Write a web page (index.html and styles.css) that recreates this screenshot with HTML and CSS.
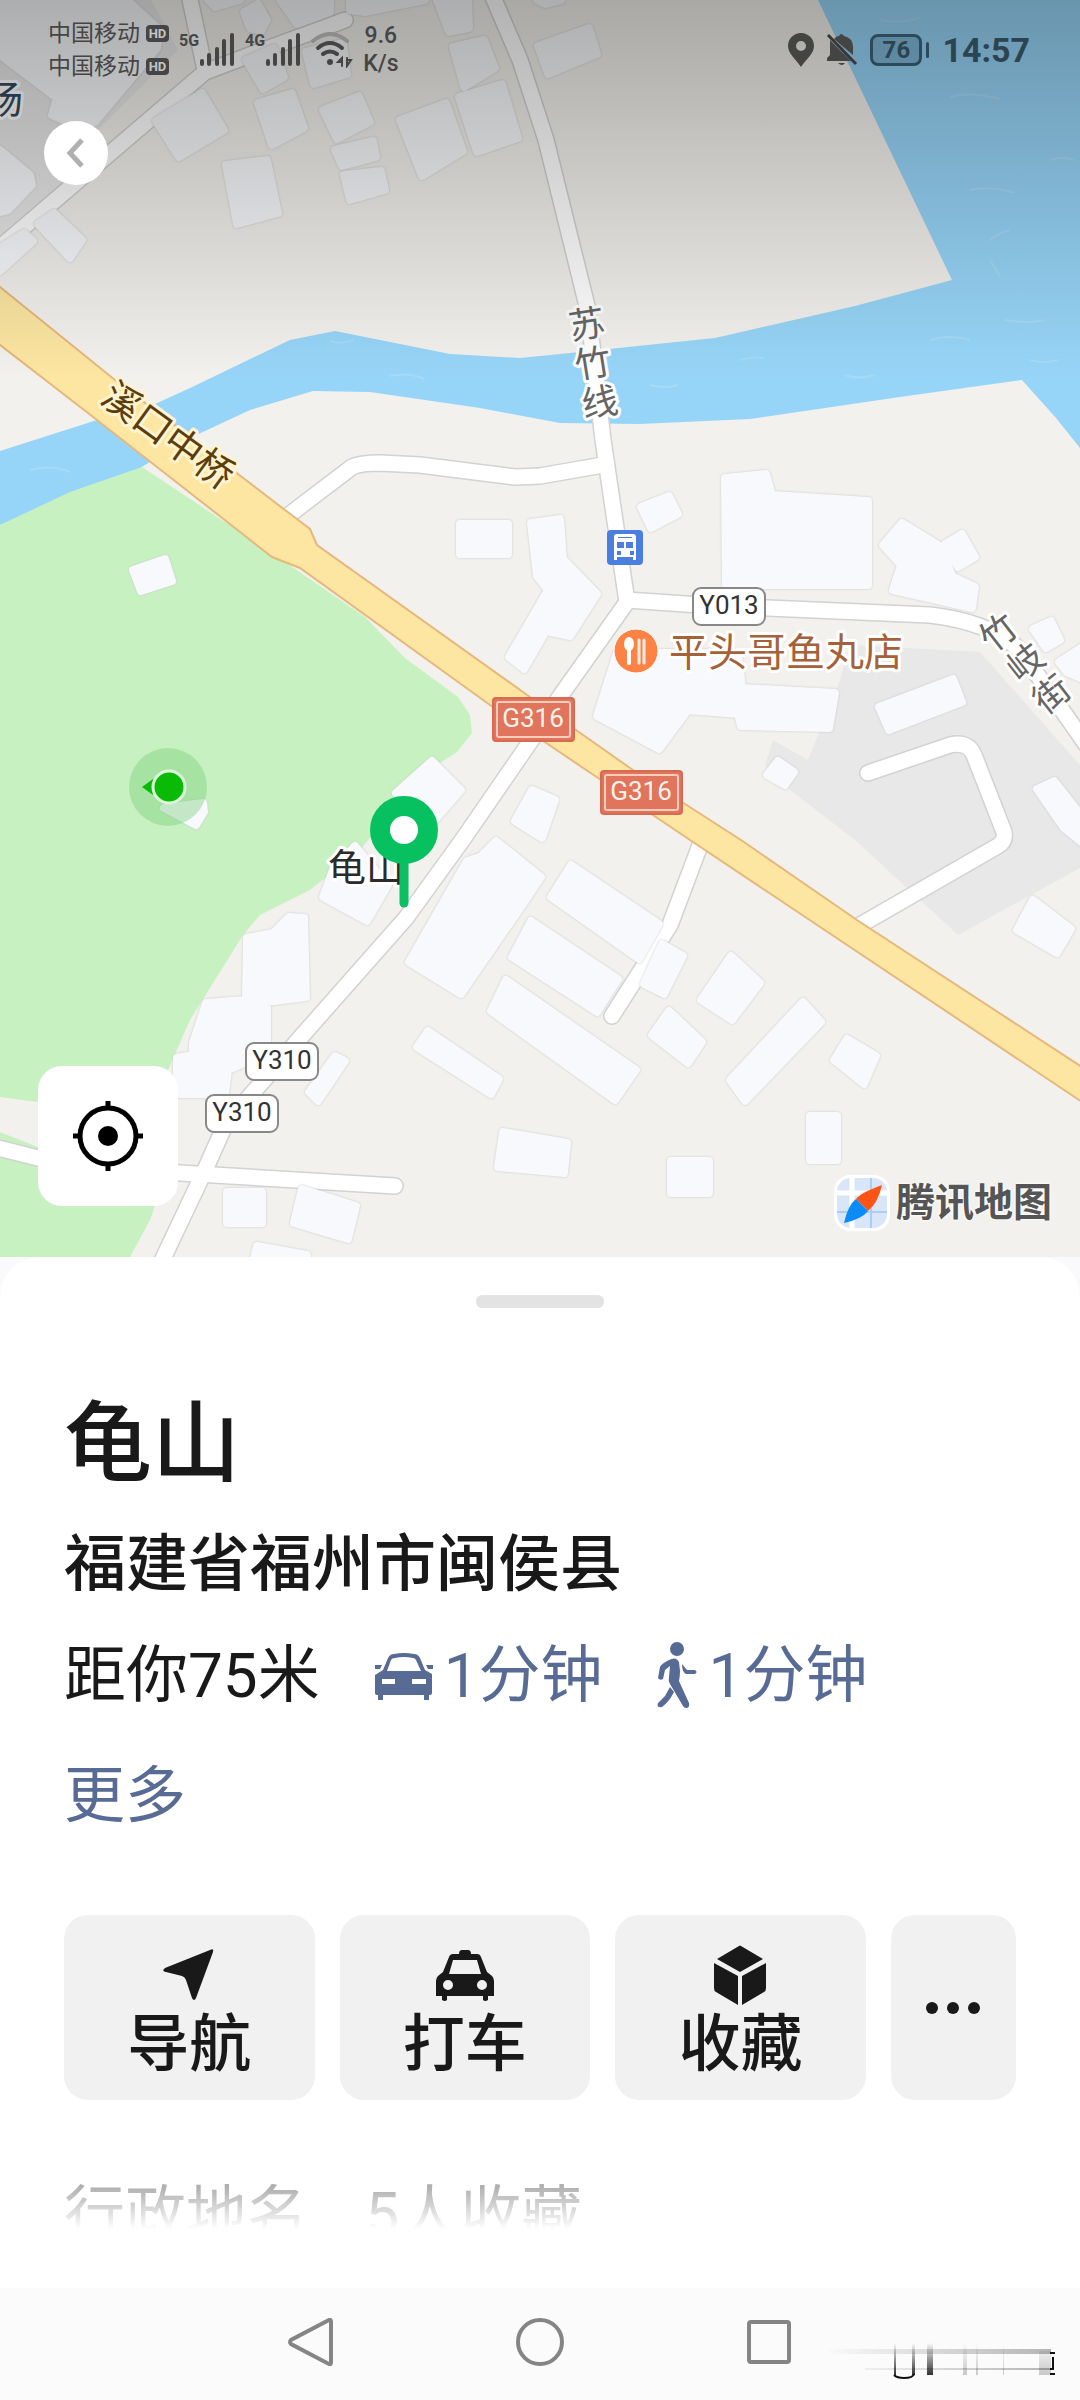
FILE: index.html
```html
<!DOCTYPE html>
<html lang="zh-CN">
<head>
    <meta charset="UTF-8">
    <meta name="viewport" content="width=device-width, initial-scale=1.0">
    <title>龟山</title>
    <link rel="stylesheet" href="styles.css">
</head>
<body>
    <div class="map">
        <svg class="map-canvas" viewBox="0 0 1080 1257">
            <!-- river -->
            <path class="water" d="M0 451 97 420 155 404 190 388 290 340 335 331 450 354 520 358 580 352 715 338 855 306 952 280 818 0H1080V448L1056 418 1022 380 900 397 750 419 640 424 560 423 480 408 370 392 313 391 250 410 190 438 140 468 105 487 0 525Z"/>
            <path class="ripple" d="M330 341q12 4 24 -1M390 376q20 -4 34 3M650 385q16 4 28 0M740 360q14 -4 24 -2M845 375q12 5 30 0M930 340q20 -6 40 0M970 190q20 -4 45 3M950 97q20 -6 50 2M990 240q10 -8 20 -10M1005 320q20 4 40 0M30 470q20 -6 40 2M1050 160q12 -4 24 0M880 20q20 4 40 -2M1030 360q14 4 28 0M990 260l10 16"/>

            <!-- green land -->
            <path class="green" d="M0 525 70 492 142 467 285 562 365 617 405 658 458 697 470 715 472 733 457 752 420 776 360 850 310 890 260 915 243 935 190 1020 155 1100 100 1110 38 1102 0 1097Z"/>
            <path class="green" d="M0 1132 38 1147 80 1160 155 1180V1206L150 1220 130 1257H0Z"/>

            <!-- grey sites -->
            <path class="site" d="M0 0H151L178 50 100 128 62 183 0 235Z"/>
            <path class="site" d="M850 645 980 652 1080 765V868L958 935 855 840 790 790 765 765 773 740 808 760 840 680Z"/>

            <!-- small roads: casing first, then fill -->
            <g class="road-case">
                <path id="r1" d="M-10 256 205 72 250 55 345 20M188 -10 205 70"/>
                <path id="r2" d="M490 -10 520 60 546 140 588 310 603 440 627 602"/>
                <path id="r3" d="M285 518 352 467Q360 463 380 463L420 465 515 477 540 476 603 465"/>
                <path id="r4" d="M627 600 700 605 930 615Q990 622 1020 650L1090 750"/>
                <path id="r5" d="M868 773 950 745Q968 741 974 755L1004 832Q1006 842 996 847L855 928"/>
                <path id="r6" d="M702 840 670 925 612 1016"/>
                <path id="r7" d="M160 1265 205 1170 225 1125 300 1038 406 918 461 842 528 745 561 695 627 602"/>
                <path id="r8" d="M-10 1146 38 1158 180 1173 395 1186"/>
            </g>
            <g class="road-fill">
                <use href="#r1"/><use href="#r2"/><use href="#r3"/><use href="#r4"/>
                <use href="#r5"/><use href="#r6"/><use href="#r7"/><use href="#r8"/>
            </g>

            <g class="buildings">
                <path d="M0 3H130L160 30 157 48 95 122 75 125 52 115 57 98 0 55ZM0 150 30 175 32 185 8 210 0 212Z"/>
                <path d="M208 0H240L215 7ZM244 12 258 4 267 20 261 31 250 28ZM280 0H330V12L297 24ZM350 0H425L365 12 350 10ZM437 0H468L469 28 449 32Z"/>
                <path d="M453 47 484 40 495 68 464 87ZM459 97 502 84 518 138 477 152ZM400 120 446 103 463 151 422 176ZM156 121 202 93 224 130 179 157ZM258 103 292 93 304 128 272 145ZM323 110 359 96 370 122 337 139Z"/>
                <path d="M335 150 373 141 376 157 342 166ZM344 175 381 171 385 190 350 200ZM226 165 267 160 278 213 237 224ZM246 60 274 48 284 77 263 89ZM306 52 343 43 347 74 314 84ZM38 224 54 213 82 240 70 258ZM0 248 24 233 33 241 0 271ZM538 46 589 28 597 54 548 74ZM537 0H561L545 4Z"/>
                <path d="M460 524H508V554H460ZM133 570 165 559 172 581 141 591ZM164 808 203 803 204 812 196 825ZM396 793 432 761 461 790 430 826ZM333 870 355 846 388 885 367 921 323 897Z"/>
                <path d="M531 523 560 519 563 559 597 594 570 636 546 631 524 669 509 657 548 590 537 576ZM641 507 669 496 678 514 651 528ZM725 478 766 474 772 495 868 501V585H726Z"/>
                <path d="M883 545 902 523 938 545 953 577 975 587 972 608 893 590 901 565ZM944 545 962 534 975 557 958 567ZM617 653 738 653 742 688 835 693 829 728 741 726 738 714 688 710 659 749 597 716ZM879 707 953 679 962 702 889 730ZM767 775 778 761 794 772 785 785Z"/>
                <path d="M1033 629 1051 621 1060 640 1046 648ZM1059 662 1085 645V680L1067 672ZM1037 789 1054 781 1085 820V845L1064 828ZM515 821 532 790 555 800 542 838ZM409 962 467 861 480 857 496 841 541 877 523 904 461 994Z"/>
                <path d="M551 897 571 865 659 924 639 959ZM512 957 531 921 618 979 597 1012ZM491 1011 506 980 636 1070 615 1100ZM417 1047 428 1031 499 1079 491 1094ZM662 944 683 956 664 994 644 984ZM731 956 760 983 732 1020 701 1000ZM652 1035 669 1011 702 1042 688 1063ZM803 1002 821 1022 745 1101 730 1080ZM834 1060 847 1039 876 1056 864 1084Z"/>
                <path d="M810 1116H837V1160H810ZM671 1161H709V1193H671ZM498 1167 503 1132 567 1143 564 1173ZM1017 930 1033 900 1071 929 1057 953ZM247 938 273 933 289 917 304 918 306 997 267 1002V1053L228 1070 225 1094H177V1058L193 1055V1043L206 1003 246 1000ZM309 1092 335 1056 345 1061 318 1101ZM227 1192H262V1223H227ZM294 1223 302 1189 356 1206 348 1239ZM253 1262 257 1246 307 1255V1262Z"/>
            </g>

            <!-- national road G316 -->
            <path class="highway" d="M-5 283 115 380 285 510 310 529 317 545 530 697 576 730 640 775 741 840 857 920 1085 1069V1104L690 840 601 780 490 705 300 568 272 557 97 420 -5 341Z"/>

            <!-- road and place names -->
            <text class="label bridge" transform="rotate(36 170 436)" x="168" y="450">溪口中桥</text>
            <g class="label street">
                <text transform="rotate(-9 587 325)" x="587" y="337">苏</text>
                <text transform="rotate(-9 593 364)" x="593" y="376">竹</text>
                <text transform="rotate(-9 600 403)" x="600" y="415">线</text>
                <text transform="rotate(-38 999 633)" x="999" y="645">竹</text>
                <text transform="rotate(-38 1026 663)" x="1026" y="675">岐</text>
                <text transform="rotate(-38 1052 695)" x="1052" y="707">街</text>
            </g>
            <text class="label yard" x="4" y="113">场</text>
            <text class="label shop" x="669" y="666">平头哥鱼丸店</text>
            <text class="label place" x="328" y="881">龟山</text>

            <g class="shield">
                <rect x="693" y="588" width="72" height="37" rx="8"/>
                <text x="729" y="614">Y013</text>
                <rect x="246" y="1043" width="72" height="37" rx="8"/>
                <text x="282" y="1069">Y310</text>
                <rect x="206" y="1095" width="72" height="37" rx="8"/>
                <text x="242" y="1121">Y310</text>
            </g>
            <g class="shield shield-red">
                <rect x="493" y="698" width="81" height="43" rx="3"/>
                <rect class="inner" x="497" y="702" width="73" height="35" rx="2"/>
                <text x="533" y="727">G316</text>
                <rect x="601" y="771" width="81" height="43" rx="3"/>
                <rect class="inner" x="605" y="775" width="73" height="35" rx="2"/>
                <text x="641" y="800">G316</text>
            </g>

            <!-- bus stop -->
            <g>
                <rect x="607" y="530" width="36" height="35" rx="4" fill="#4a7fe0"/>
                <path fill="#fff" d="M614 537q0 -3 3 -3h16q3 0 3 3v23h-3v-3h-16v3h-3Z"/>
                <path fill="#4a7fe0" d="M618 537h14v1h-14ZM617 542h7v6h-7ZM626 542h7v6h-7ZM617 551h4v4h-4ZM630 551h4v4h-4Z"/>
            </g>

            <!-- restaurant -->
            <g>
                <circle cx="636" cy="651" r="22" fill="#fd8344" stroke="#fff" stroke-width="1"/>
                <ellipse cx="629" cy="644" rx="5" ry="7" fill="#fff"/>
                <path stroke="#fff" stroke-width="4" stroke-linecap="round" d="M629 648V663"/>
                <path stroke="#fff" stroke-width="3" stroke-linecap="round" d="M639 640V663M644 640V663" opacity=".85"/>
            </g>

            <!-- current position -->
            <g>
                <circle cx="168" cy="787" r="39" fill="#6fce72" opacity=".38"/>
                <path fill="#09bb07" d="M142 787 153 779V795Z"/>
                <circle cx="169" cy="787" r="16" fill="#09bb07" stroke="#dff7dc" stroke-width="3"/>
            </g>

            <!-- selected place -->
            <g>
                <path stroke="#0cbf62" stroke-width="9" stroke-linecap="round" d="M404 855V903"/>
                <circle cx="404" cy="830" r="24" fill="#fff" stroke="#07c160" stroke-width="20"/>
            </g>
        </svg>

        <div class="map-shade"></div>

        <header class="status">
            <div class="carriers">
                <span>中国移动<b class="hd">HD</b></span>
                <span>中国移动<b class="hd">HD</b></span>
            </div>
            <div class="signal">
                <b>5G</b>
                <svg width="36" height="36" viewBox="0 0 36 36"><path d="M3 29V32M10 23V32M18 17V32M25 9V32M33 3V32"/></svg>
            </div>
            <div class="signal">
                <b>4G</b>
                <svg width="36" height="36" viewBox="0 0 36 36"><path d="M3 29V32M10 23V32M18 17V32M25 9V32M33 3V32"/></svg>
            </div>
            <svg class="wifi" width="42" height="36" viewBox="0 0 42 36">
                <path class="dim" d="M2 9Q19 -5 36 9"/>
                <path d="M7 16Q19 6 31 16M12 22Q19 17 26 22"/>
                <circle cx="19" cy="30" r="3"/>
                <path class="arrows" d="M31 34V26L27 30H31M36 26V34L40 28H36"/>
            </svg>
            <div class="speed"><span>9.6</span><span>K/s</span></div>
            <div class="status-right">
                <svg width="26" height="34" viewBox="0 0 26 34"><path fill-rule="evenodd" d="M13 0A13 13 0 0 0 0 13C0 21 8 26 13 34 18 26 26 21 26 13A13 13 0 0 0 13 0ZM13 8a5 5 0 1 1 0 10a5 5 0 1 1 0 -10Z"/></svg>
                <svg width="32" height="34" viewBox="0 0 32 34">
                    <path d="M4 7 25 28H1V25L4 22ZM8 6Q10 3 13 3Q15 -1 18 3Q27 5 27 14V22ZM12 30H19Q16 34 12 30Z"/>
                    <path stroke="#33383a" stroke-width="3" d="M2 2 30 31"/>
                </svg>
                <div class="battery">76</div>
                <time>14:57</time>
            </div>
        </header>

        <button class="back" aria-label="返回">
            <svg width="20" height="32" viewBox="0 0 20 32"><path d="M16 3 4 16 16 29"/></svg>
        </button>

        <button class="locate" aria-label="定位">
            <svg width="72" height="72" viewBox="0 0 72 72">
                <circle cx="36" cy="36" r="28"/>
                <path d="M36 1V9M36 63V71M1 36H9M63 36H71"/>
                <circle class="dot" cx="36" cy="36" r="10"/>
            </svg>
        </button>

        <div class="brand">
            <svg width="56" height="56" viewBox="0 0 56 56">
                <rect width="56" height="56" rx="16" fill="#fff"/>
                <rect x="3" y="3" width="50" height="50" rx="14" fill="#d9e6f8"/>
                <path stroke="#fff" stroke-width="5" d="M18 3V53M3 18H53"/>
                <path stroke="#a9cdf3" stroke-width="2" d="M37 3V53M3 37H53"/>
                <path fill="#fb5416" d="M48 10Q26 18 22 24L34 36Q44 28 48 10Z"/>
                <path fill="#0b8bf5" d="M22 24Q14 30 10 48 28 44 34 36Z"/>
            </svg>
            <span>腾讯地图</span>
        </div>
    </div>

    <main class="sheet">
        <div class="handle"></div>
        <h1>龟山</h1>
        <p class="address">福建省福州市闽侯县</p>
        <div class="distance">
            <span>距你75米</span>
            <a href="#drive">
                <svg width="60" height="60" viewBox="0 0 60 60">
                    <path fill-rule="evenodd" d="M9 24 14 12Q16 8 20 8 30 6 40 8 44 8 46 12L51 24 58 28V47Q58 49 56 49H55V54H50V49H9V54H4V49Q1 49 1 47V29ZM13 25H47L42 14Q41 12 39 12 30 10 21 12 18 12 17 14ZM8 33V38H21V33ZM38 33V38H52V33ZM1 19H8L6 23H1ZM52 19H59V23H54Z"/>
                </svg>
                1分钟
            </a>
            <a href="#walk">
                <svg width="42" height="68" viewBox="14 0 42 68">
                    <circle cx="34" cy="7" r="7"/>
                    <path d="M26 18Q33 14 36 20L37 29Q37 34 36 39L46 61Q47 66 43 66 41 66 40 64L27 42Q25 39 26 35L27 24 22 28 20 37Q17 39 15 36L17 25Q18 22 26 18Z"/>
                    <path d="M27 45 31 50Q26 60 19 65 13 66 15 61L22 54Z"/>
                    <path d="M39 22 44 28H52Q55 30 52 32H43Q39 30 39 22Z"/>
                </svg>
                1分钟
            </a>
        </div>
        <a class="more" href="#more">更多</a>

        <div class="actions">
            <button>
                <svg width="60" height="60" viewBox="0 0 60 60"><path d="M51 5Q55 3 54 7L37 53Q35 57 33 53L27 35Q26 32 23 31L7 27Q2 26 6 23Z"/></svg>
                <span>导航</span>
            </button>
            <button>
                <svg width="60" height="60" viewBox="0 0 60 60">
                    <path fill-rule="evenodd" d="M24 9Q24 5 27 5H33Q36 5 36 9H42Q45 9 46 12L52 27 57 31Q59 33 59 36V51H53V55Q50 57 48 55V51H12V55Q10 57 7 55V51H1V36Q1 33 3 31L8 27 14 12Q15 9 18 9ZM18 15 14 29H46L42 15ZM13 35a5 5 0 1 0 0 10a5 5 0 1 0 0 -10ZM47 35a5 5 0 1 0 0 10a5 5 0 1 0 0 -10Z"/>
                </svg>
                <span>打车</span>
            </button>
            <button>
                <svg width="60" height="60" viewBox="0 0 60 60">
                    <path d="M29 1Q30 0 31 1L53 14 30 27 7 14ZM4 18 28 31V60L6 47Q4 46 4 43ZM56 18 32 31V60L54 47Q56 46 56 43Z"/>
                </svg>
                <span>收藏</span>
            </button>
            <button aria-label="更多操作">
                <svg width="60" height="12" viewBox="0 0 60 12"><circle cx="9" cy="6" r="6"/><circle cx="30" cy="6" r="6"/><circle cx="51" cy="6" r="6"/></svg>
            </button>
        </div>

        <div class="tags">
            <span>行政地名</span>
            <span>5人收藏</span>
        </div>
    </main>

    <nav class="navbar">
        <button aria-label="后退">
            <svg width="48" height="48" viewBox="0 0 48 48"><path d="M42 2Q44 1 44 4V44Q44 47 42 46L4 26Q2 24 4 22Z"/></svg>
        </button>
        <button aria-label="主页">
            <svg width="48" height="48" viewBox="0 0 48 48"><circle cx="24" cy="24" r="22"/></svg>
        </button>
        <button aria-label="最近任务">
            <svg width="48" height="48" viewBox="0 0 48 48"><rect x="4" y="4" width="40" height="40" rx="2"/></svg>
        </button>
        <svg class="smear" width="230" height="40" viewBox="0 0 230 40">
            <defs>
                <linearGradient id="across"><stop offset="0" stop-color="#000" stop-opacity="0"/><stop offset="1" stop-color="#000" stop-opacity=".28"/></linearGradient>
                <linearGradient id="down" x2="0" y2="1"><stop offset="0" stop-color="#000" stop-opacity="0"/><stop offset="1" stop-color="#000" stop-opacity=".8"/></linearGradient>
            </defs>
            <path fill="url(#across)" d="M0 8H226V13H0ZM40 27H226V29H40Z"/>
            <path fill="url(#down)" d="M69 2H71V34H69ZM87 2H90V34H87ZM102 2H108V34H102Z"/>
            <path fill="url(#down)" opacity=".25" d="M138 2H142V34H138ZM151 2H153V34H151ZM178 2H179V34H178ZM214 10H226V34H214Z"/>
            <path fill="none" stroke="#111" stroke-width="2" d="M69 34Q72 37 79 37 88 37 89 33M225 12H230M228 16V28H225M225 33H230"/>
        </svg>
    </nav>
</body>
</html>
```
FILE: styles.css
```css
* {
    box-sizing: border-box;
}

body {
    margin: 0;
    min-height: 100vh;
    display: flex;
    flex-direction: column;
    background-color: #fafafc;
    color: #191919;
    font-family: Roboto, "Noto Sans CJK SC", sans-serif;
}

button {
    border: none;
    padding: 0;
    font-family: inherit;
    color: inherit;
}

a {
    color: #576b95;
    text-decoration: none;
}

svg {
    display: block;
    flex-shrink: 0;
}

/* map */
.map {
    position: relative;
    overflow: hidden;
    background-color: #f2f1ed;
}

.map-canvas {
    width: 100%;
    height: auto;
}

.water {
    fill: #97d5f8;
}

.ripple {
    fill: none;
    stroke: #b3ddf6;
    stroke-width: 2;
    opacity: 0.6;
}

.green {
    fill: #c8f1c2;
}

.site {
    fill: #e8e8e8;
}

.road-case {
    fill: none;
    stroke: #d2d2d2;
    stroke-width: 18;
    stroke-linecap: round;
    stroke-linejoin: round;
}

.road-fill {
    fill: none;
    stroke: #fff;
    stroke-width: 15;
    stroke-linecap: round;
    stroke-linejoin: round;
}

.buildings {
    fill: #f8f9fc;
    stroke: #f8f9fc;
    stroke-width: 8;
    stroke-linejoin: round;
    filter: drop-shadow(0 0 1px #c8c8c8);
}

.highway {
    fill: #fde6a2;
    stroke: #e6b87c;
    stroke-width: 2;
}

.label {
    paint-order: stroke;
    stroke: #fff;
    stroke-width: 6;
    stroke-linejoin: round;
}

.bridge {
    font-size: 38px;
    fill: #5a3d0a;
    stroke: #fff3d0;
    text-anchor: middle;
}

.street {
    font-size: 36px;
    fill: #666;
    text-anchor: middle;
}

.yard {
    font-size: 38px;
    fill: #34495e;
    text-anchor: middle;
}

.shop {
    font-size: 39px;
    fill: #a5623a;
}

.place {
    font-size: 38px;
    fill: #2b2b2b;
}

.shield {
    font-size: 26px;
    text-anchor: middle;
}

.shield rect {
    fill: #fff;
    stroke: #888;
    stroke-width: 2;
}

.shield text {
    fill: #333;
}

.shield-red rect {
    fill: #e0745c;
    stroke: #d86a52;
}

.shield-red .inner {
    fill: none;
    stroke: #f9cdbb;
}

.shield-red text {
    fill: #fff3ea;
}

.map-shade {
    position: absolute;
    top: 0;
    left: 0;
    right: 0;
    height: 380px;
    background: linear-gradient(rgba(0, 0, 0, 0.3), rgba(0, 0, 0, 0));
}

/* status bar */
.status {
    position: absolute;
    top: 0;
    left: 0;
    right: 0;
    height: 100px;
    padding: 0 50px 0 48px;
    display: flex;
    align-items: center;
    color: #454545;
}

.carriers {
    display: flex;
    flex-direction: column;
    font-size: 23px;
    line-height: 33px;
}

.carriers span {
    display: flex;
    align-items: center;
    gap: 6px;
}

.hd {
    width: 23px;
    height: 17px;
    border-radius: 4px;
    background-color: #454545;
    color: #c4c4c4;
    font-size: 13px;
    line-height: 17px;
    text-align: center;
}

.signal {
    display: flex;
    align-items: center;
    margin-left: 10px;
}

.signal b {
    font-size: 16px;
    line-height: 16px;
    margin-bottom: 18px;
}

.signal svg {
    fill: none;
    stroke: #444;
    stroke-width: 4;
    stroke-linecap: round;
}

.wifi {
    margin-left: 10px;
    fill: none;
    stroke: #444;
    stroke-width: 4;
    stroke-linecap: round;
}

.wifi .dim {
    stroke: #8c8c8a;
}

.wifi circle {
    fill: #444;
    stroke: none;
}

.wifi .arrows {
    stroke-width: 2;
}

.speed {
    margin-left: 10px;
    display: flex;
    flex-direction: column;
    text-align: center;
    font-size: 23px;
    font-weight: 500;
    line-height: 28px;
}

.status-right {
    margin-left: auto;
    display: flex;
    align-items: center;
    gap: 12px;
    color: #2c4350;
}

.status-right svg {
    fill: #444442;
}

.battery {
    position: relative;
    width: 52px;
    height: 32px;
    margin-right: 8px;
    border: 3px solid #2c4a5a;
    border-radius: 8px;
    font-size: 24px;
    font-weight: 700;
    line-height: 26px;
    text-align: center;
    background-color: rgba(44, 74, 90, 0.25);
}

.battery::after {
    content: "";
    position: absolute;
    top: 5px;
    right: -10px;
    width: 3px;
    height: 16px;
    border-radius: 2px;
    background-color: #2c4a5a;
}

time {
    font-size: 34px;
    font-weight: 700;
}

/* map controls */
.back {
    position: absolute;
    top: 121px;
    left: 44px;
    width: 64px;
    height: 64px;
    border-radius: 50%;
    background-color: #fff;
    display: flex;
    align-items: center;
    justify-content: center;
}

.back svg {
    fill: none;
    stroke: #b0b0b0;
    stroke-width: 5;
}

.locate {
    position: absolute;
    left: 38px;
    bottom: 51px;
    width: 140px;
    height: 140px;
    border-radius: 24px;
    background-color: #fff;
    display: flex;
    align-items: center;
    justify-content: center;
}

.locate svg {
    fill: none;
    stroke: #000;
    stroke-width: 5;
}

.locate .dot {
    fill: #000;
    stroke: none;
}

.brand {
    position: absolute;
    right: 28px;
    bottom: 26px;
    display: flex;
    align-items: center;
    gap: 6px;
    color: #555;
    font-size: 39px;
    font-weight: 700;
    line-height: 56px;
    text-shadow: 0 0 3px #fff, 0 0 3px #fff;
}

/* bottom sheet */
.sheet {
    flex: 1;
    padding: 0 64px;
    border-radius: 40px 40px 0 0;
    background-color: #fff;
    display: flex;
    flex-direction: column;
}

.handle {
    align-self: center;
    width: 128px;
    height: 13px;
    margin-top: 38px;
    border-radius: 6px;
    background-color: #e3e3e3;
}

h1 {
    margin: 86px 0 0;
    font-size: 88px;
    font-weight: 500;
    line-height: 100px;
}

.address {
    margin: 31px 0 0;
    font-size: 62px;
    font-weight: 500;
    line-height: 80px;
}

.distance {
    margin-top: 31px;
    display: flex;
    gap: 54px;
    font-size: 62px;
    line-height: 80px;
}

.distance a {
    display: flex;
    align-items: center;
    gap: 10px;
}

.distance svg {
    fill: #576b95;
}

.more {
    align-self: flex-start;
    margin-top: 40px;
    font-size: 61px;
    line-height: 80px;
}

.actions {
    margin-top: 79px;
    display: grid;
    grid-template-columns: 2fr 2fr 2fr 1fr;
    gap: 25px;
}

.actions button {
    height: 185px;
    border-radius: 24px;
    background-color: #f1f1f1;
    font-size: 62px;
    font-weight: 500;
    line-height: 76px;
    display: flex;
    flex-direction: column;
    align-items: center;
    justify-content: center;
    gap: 2px;
}

.actions button:not(:last-child) {
    padding-top: 12px;
}

.actions svg {
    fill: #191919;
}

.tags {
    margin-top: 75px;
    display: flex;
    gap: 57px;
    color: #b0b0b0;
    font-size: 61px;
    line-height: 80px;
    -webkit-mask-image: linear-gradient(#000 15%, transparent 68%);
    mask-image: linear-gradient(#000 15%, transparent 68%);
}

/* system navigation */
.navbar {
    position: relative;
    height: 112px;
    padding-bottom: 4px;
    background-color: #fbfbfb;
    display: flex;
    align-items: center;
    justify-content: center;
    gap: 181px;
}

.navbar button {
    background: none;
}

.navbar button svg {
    fill: none;
    stroke: #858585;
    stroke-width: 4;
}

.smear {
    position: absolute;
    right: 25px;
    bottom: 19px;
}
```
